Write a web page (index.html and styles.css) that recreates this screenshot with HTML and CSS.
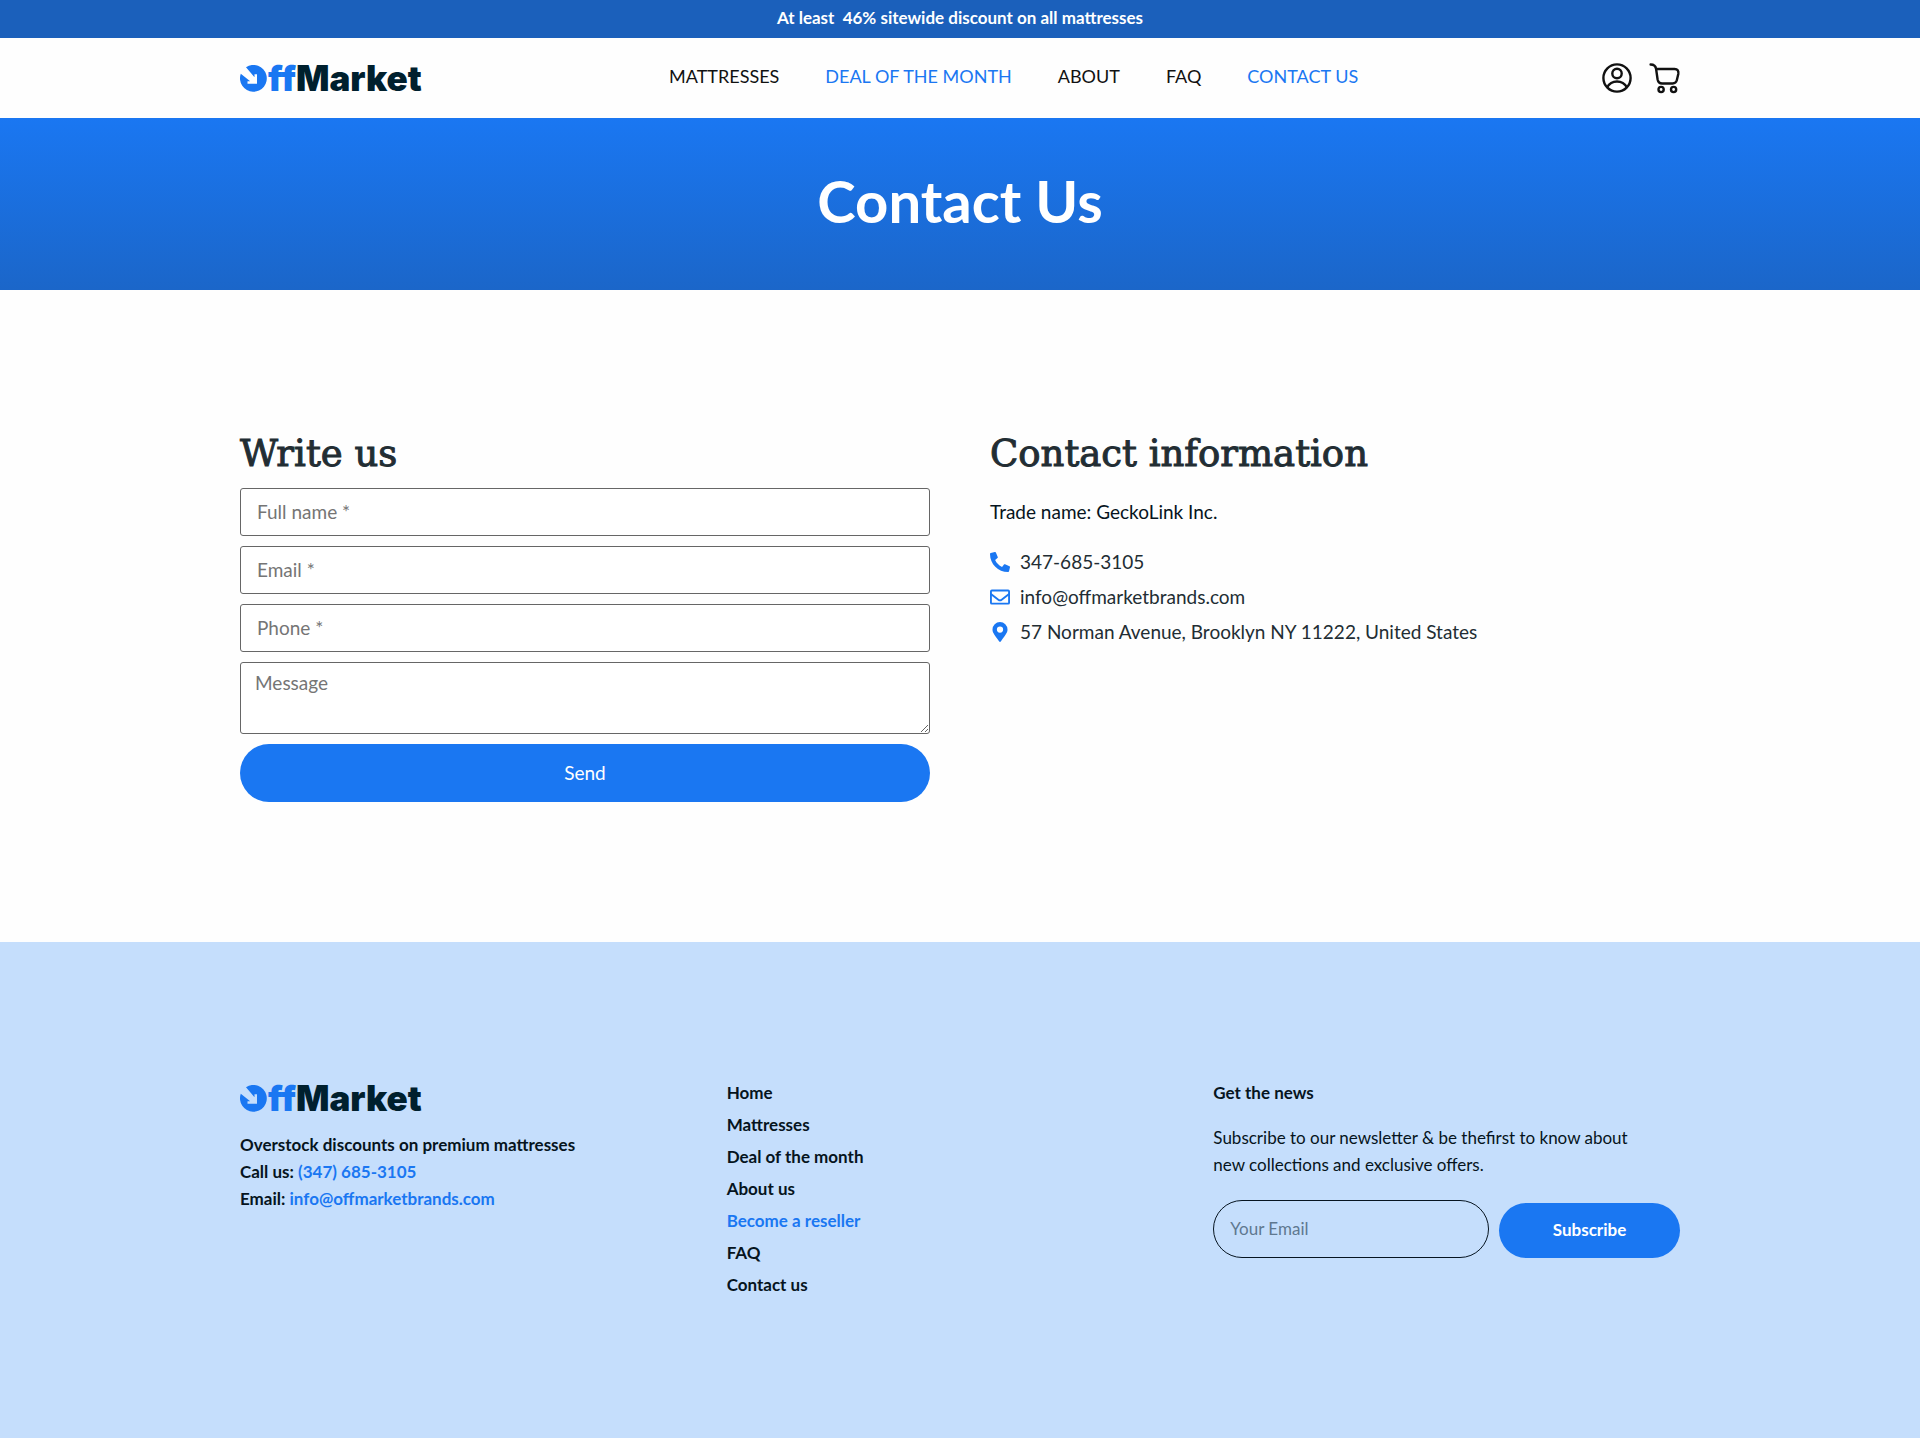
FILE: index.html
```html
<!DOCTYPE html>
<html lang="en">
<head>
<meta charset="utf-8">
<meta name="viewport" content="width=device-width, initial-scale=1">
<title>Contact Us - OffMarket</title>
<link rel="stylesheet" href="styles.css">
</head>
<body>
<p class="promo">At least&nbsp; 46% sitewide discount on all mattresses</p>

<header class="header">
  <div class="container header-row">
    <a class="logo" href="#" aria-label="OffMarket">
      <svg class="logo-mark" viewBox="0 0 27 27" aria-hidden="true"><path d="M6 2.200A13.400 13.400 0 1 1 .8 8.800L10.200 16.300H7.500V18.800H17V9.300H14.500V12.300Z" fill="#1a77f2"/></svg>
      <span class="logo-off">ff</span><span class="logo-market">Market</span>
    </a>
    <nav class="nav" aria-label="Main">
      <a href="#">MATTRESSES</a>
      <a class="accent" href="#">DEAL OF THE MONTH</a>
      <a href="#">ABOUT</a>
      <a href="#">FAQ</a>
      <a class="accent" href="#">CONTACT US</a>
    </nav>
    <div class="actions">
      <a href="#" aria-label="Account"><svg viewBox="-1 0 32 32" class="action-icon" aria-hidden="true"><g fill="none" stroke="#111" stroke-width="2.4"><circle cx="16" cy="16" r="13.600"/><circle cx="16" cy="11.500" r="4.700"/><path d="M6 25.500C10.500 17.500 21.500 17.500 26 25.500"/></g></svg></a>
      <a href="#" aria-label="Cart"><svg viewBox="-.6 0 32 32" class="action-icon" aria-hidden="true"><g fill="none" stroke="#111" stroke-width="2.4" stroke-linecap="round" stroke-linejoin="round"><path d="M2 2.500C5 2.500 7 3.500 7.500 7L9 17.500Q9.800 21.500 13.500 21.500H24Q27.300 21.500 28.200 18.300L29.700 12Q30.400 7 26 7H7.500"/><circle cx="12.500" cy="27.500" r="2.600"/><circle cx="25" cy="27.500" r="2.600"/></g></svg></a>
    </div>
  </div>
</header>

<main>
  <section class="hero"><h1>Contact Us</h1></section>
  <div class="container contact">
    <section>
      <h2>Write us</h2>
      <form class="form">
        <input class="field" type="text" aria-label="Full name" placeholder="Full name *">
        <input class="field" type="email" aria-label="Email" placeholder="Email *">
        <input class="field" type="tel" aria-label="Phone" placeholder="Phone *">
        <textarea class="field field-message" aria-label="Message" placeholder="Message"></textarea>
        <button class="button" type="button">Send</button>
      </form>
    </section>
    <section>
      <h2>Contact information</h2>
      <p class="trade">Trade name: GeckoLink Inc.</p>
      <ul class="details">
        <li><svg viewBox="0 0 512 512" aria-hidden="true"><path fill="#1a77f2" d="M18.920 24.380L122.900.4C134.200-2.300 145.800 3.600 150.400 14.300L198.400 126.300C202.600 136.100 199.800 147.600 191.500 154.300L130.900 203.900C166.900 280.600 229.900 344.500 308.100 381.100L357.700 320.500C364.400 312.200 375.900 309.400 385.700 313.600L497.700 361.600C508.400 366.200 514.300 377.800 511.600 389.100L487.600 493.100C485.100 504.200 475.400 512 464 512C207.900 512 0 304.500 0 48C0 36.600 7.900 26.900 18.920 24.380Z"/></svg><a href="#">347-685-3105</a></li>
        <li><svg viewBox="0 0 512 512" aria-hidden="true"><g fill="none" stroke="#1a77f2" stroke-width="48" stroke-linejoin="round"><rect x="24" y="88" width="464" height="336" rx="24"/><path d="M24 180L214 326Q256 358 298 326L488 180"/></g></svg><a href="#">info@offmarketbrands.com</a></li>
        <li><svg viewBox="0 0 512 512" aria-hidden="true"><path fill="#1a77f2" fill-rule="evenodd" d="M236 502C91 291 64 270 64 192A192 192 0 0 1 448 192C448 270 421 291 276 502Q256 522 236 502ZM256 272A80 80 0 1 0 256 112A80 80 0 0 0 256 272Z"/></svg><span>57 Norman Avenue, Brooklyn NY 11222, United States</span></li>
      </ul>
    </section>
  </div>
</main>

<footer class="footer">
  <div class="container footer-grid">
    <div class="brand">
      <a class="logo" href="#" aria-label="OffMarket">
        <svg class="logo-mark" viewBox="0 0 27 27" aria-hidden="true"><path d="M6 2.200A13.400 13.400 0 1 1 .8 8.800L10.200 16.300H7.500V18.800H17V9.300H14.500V12.300Z" fill="#1a77f2"/></svg>
        <span class="logo-off">ff</span><span class="logo-market">Market</span>
      </a>
      <p class="about">Overstock discounts on premium mattresses<br>Call us: <a class="accent" href="#">(347) 685-3105</a><br>Email: <a class="accent" href="#">info@offmarketbrands.com</a></p>
    </div>
    <nav aria-label="Footer">
      <ul class="links">
        <li><a href="#">Home</a></li>
        <li><a href="#">Mattresses</a></li>
        <li><a href="#">Deal of the month</a></li>
        <li><a href="#">About us</a></li>
        <li><a class="accent" href="#">Become a reseller</a></li>
        <li><a href="#">FAQ</a></li>
        <li><a href="#">Contact us</a></li>
      </ul>
    </nav>
    <section>
      <h3>Get the news</h3>
      <p class="news">Subscribe to our newsletter &amp; be thefirst to know about new collections and exclusive offers.</p>
      <form class="subscribe">
        <input class="subscribe-input" type="email" aria-label="Your Email" placeholder="Your Email">
        <button class="button subscribe-button" type="button">Subscribe</button>
      </form>
    </section>
  </div>
</footer>
</body>
</html>
```
FILE: styles.css
```css
* { box-sizing: border-box; }

body {
  margin: 0;
  min-height: 100vh;
  display: flex;
  flex-direction: column;
  font-family: Lato, "Open Sans", sans-serif;
  font-size: 18px;
  line-height: 27px;
  color: #061420;
  background: #fefefe;
}

h1, h2, h3, p, ul { margin: 0; padding: 0; }
ul { list-style: none; }
a { color: inherit; text-decoration: none; }
svg { display: block; flex: none; }
input, textarea, button { font: inherit; }

.accent { color: #1a77f2; }

.container {
  width: 100%;
  max-width: 1480px;
  margin: 0 auto;
  padding: 0 20px;
}

.promo {
  padding: 4px 20px 7px;
  background: #1b60bb;
  color: #fff;
  font-size: 17px;
  font-weight: 700;
  text-align: center;
}

.header-row {
  display: grid;
  grid-template-columns: 4fr auto 3fr;
  align-items: center;
  min-height: 80px;
}

.logo {
  display: inline-flex;
  align-items: center;
  height: 30px;
  font-family: Inter, sans-serif;
  font-size: 35px;
  font-weight: 900;
  line-height: 30px;
}
.logo-mark { width: 27px; height: 27px; margin-right: 1px; }
.logo-off { color: #1a77f2; }
.logo-market { color: #00202e; }

.nav {
  display: flex;
  gap: 46px;
  padding-bottom: 3px;
  font-size: 18px;
  color: #111;
}

.actions {
  display: flex;
  justify-content: flex-end;
  gap: 16px;
}
.action-icon { width: 32px; height: 32px; }

.hero {
  padding: 49px 20px 55px;
  background: linear-gradient(#1a77f2, #1b66c9);
  color: #fff;
  text-align: center;
}
h1 { font-size: 58px; line-height: 68px; }

.contact {
  display: grid;
  grid-template-columns: 1fr 1fr;
  gap: 60px;
  padding-top: 140px;
  padding-bottom: 140px;
}
h2 {
  margin-bottom: 10px;
  font-family: "DejaVu Serif", serif;
  font-size: 37px;
  font-weight: 400;
  line-height: 48px;
  color: #222d33;
  -webkit-text-stroke: 1px #222d33;
}

.form {
  display: flex;
  flex-direction: column;
  gap: 10px;
}
.field {
  height: 48px;
  padding: 0 16px 2px;
  border: 1px solid #666;
  border-radius: 3px;
  background: #fff;
  font-size: 19px;
}
.field-message {
  height: 72px;
  padding: 6px 14px;
  resize: vertical;
}
::placeholder { color: #757575; opacity: 1; }

.button {
  height: 58px;
  padding-bottom: 3px;
  border: 0;
  border-radius: 29px;
  background: #1a77f2;
  color: #fff;
  font-size: 19px;
}

.trade { margin-bottom: 22px; padding-top: 10px; font-size: 19px; }
.details {
  display: grid;
  gap: 5px;
  font-size: 19px;
  line-height: 30px;
  color: #222d33;
}
.details li { display: flex; align-items: center; gap: 10px; }
.details svg { width: 20px; height: 20px; }

.footer {
  flex: 1;
  padding: 137px 0;
  background: #c5defc;
}
.footer-grid {
  display: grid;
  grid-template-columns: repeat(3, 1fr);
  gap: 20px;
}
.brand { padding-top: 4px; }
.about, .links, h3 { font-size: 17px; font-weight: 700; }
.about { margin-top: 12px; }
.links { display: grid; gap: 5px; }
h3 { margin-bottom: 18px; line-height: 27px; }
.news { max-width: 440px; margin-bottom: 22px; font-size: 17px; }

.subscribe { display: flex; align-items: flex-end; gap: 10px; }
.subscribe-input {
  flex: 1;
  min-width: 0;
  height: 58px;
  padding: 0 16px 2px;
  border: 1px solid #061420;
  border-radius: 29px;
  background: transparent;
  font-size: 17px;
}
.subscribe-input::placeholder { color: #5f7890; }
.subscribe-button {
  width: 181px;
  height: 55px;
  font-size: 17px;
  font-weight: 700;
}
```
